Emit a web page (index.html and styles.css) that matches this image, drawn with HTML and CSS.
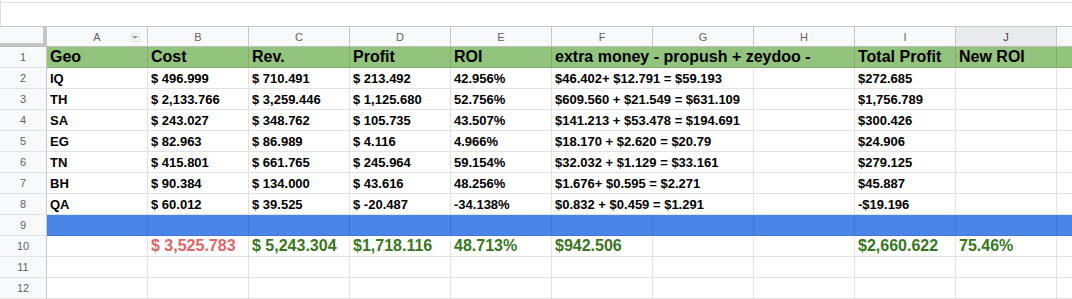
FILE: index.html
```html
<!DOCTYPE html>
<html lang="en">
<head>
  <meta charset="UTF-8" />
  <meta name="viewport" content="width=device-width, initial-scale=1.0" />
  <title>Geo Profit Sheet</title>
  <link rel="stylesheet" href="styles.css">
</head>
<body>
  <div class="formula-bar"></div>
  <table class="sheet">
    <colgroup>
      <col class="col-num">
      <col span="11" class="col-cell">
    </colgroup>
    <thead>
      <tr class="letters">
        <th class="corner"></th>
        <th class="filtered">A<span class="filter"></span></th>
        <th>B</th><th>C</th><th>D</th><th>E</th><th>F</th><th>G</th><th>H</th><th>I</th>
        <th class="active">J</th><th></th>
      </tr>
    </thead>
    <tbody>
      <tr class="r1 head">
        <th>1</th>
        <td>Geo</td><td>Cost</td><td>Rev.</td><td>Profit</td><td>ROI</td>
        <td colspan="3">extra money - propush + zeydoo -</td>
        <td>Total Profit</td><td>New ROI</td><td></td>
      </tr>
      <tr>
        <th>2</th>
        <td>IQ</td><td>$ 496.999</td><td>$ 710.491</td><td>$ 213.492</td><td>42.956%</td>
        <td colspan="2">$46.402+ $12.791 = $59.193</td><td></td>
        <td>$272.685</td><td></td><td></td>
      </tr>
      <tr>
        <th>3</th>
        <td>TH</td><td>$ 2,133.766</td><td>$ 3,259.446</td><td>$ 1,125.680</td><td>52.756%</td>
        <td colspan="2">$609.560 + $21.549 = $631.109</td><td></td>
        <td>$1,756.789</td><td></td><td></td>
      </tr>
      <tr>
        <th>4</th>
        <td>SA</td><td>$ 243.027</td><td>$ 348.762</td><td>$ 105.735</td><td>43.507%</td>
        <td colspan="2">$141.213 + $53.478 = $194.691</td><td></td>
        <td>$300.426</td><td></td><td></td>
      </tr>
      <tr>
        <th>5</th>
        <td>EG</td><td>$ 82.963</td><td>$ 86.989</td><td>$ 4.116</td><td>4.966%</td>
        <td colspan="2">$18.170 + $2.620 = $20.79</td><td></td>
        <td>$24.906</td><td></td><td></td>
      </tr>
      <tr>
        <th>6</th>
        <td>TN</td><td>$ 415.801</td><td>$ 661.765</td><td>$ 245.964</td><td>59.154%</td>
        <td colspan="2">$32.032 + $1.129 = $33.161</td><td></td>
        <td>$279.125</td><td></td><td></td>
      </tr>
      <tr>
        <th>7</th>
        <td>BH</td><td>$ 90.384</td><td>$ 134.000</td><td>$ 43.616</td><td>48.256%</td>
        <td colspan="2">$1.676+ $0.595 = $2.271</td><td></td>
        <td>$45.887</td><td></td><td></td>
      </tr>
      <tr>
        <th>8</th>
        <td>QA</td><td>$ 60.012</td><td>$ 39.525</td><td>$ -20.487</td><td>-34.138%</td>
        <td colspan="2">$0.832 + $0.459 = $1.291</td><td></td>
        <td>-$19.196</td><td></td><td></td>
      </tr>
      <tr class="r9 divider">
        <th>9</th>
        <td></td><td></td><td></td><td></td><td></td><td></td><td></td><td></td><td></td><td></td><td></td>
      </tr>
      <tr class="r10 totals">
        <th>10</th>
        <td></td><td class="neg">$ 3,525.783</td><td>$ 5,243.304</td><td>$1,718.116</td><td>48.713%</td>
        <td>$942.506</td><td></td><td></td>
        <td>$2,660.622</td><td>75.46%</td><td></td>
      </tr>
      <tr>
        <th>11</th>
        <td></td><td></td><td></td><td></td><td></td><td></td><td></td><td></td><td></td><td></td><td></td>
      </tr>
      <tr>
        <th>12</th>
        <td></td><td></td><td></td><td></td><td></td><td></td><td></td><td></td><td></td><td></td><td></td>
      </tr>
    </tbody>
  </table>
</body>
</html>
```

FILE: styles.css
```css
html, body { margin: 0; overflow: hidden; background: #fff; }
body { font-family: Arial, "Liberation Sans", sans-serif; color: #000; }

.formula-bar {
  height: 26px;
  box-sizing: border-box;
  border-left: 1px solid #e0e0e0;
  background: linear-gradient(#e0e0e0, #e0e0e0) 0 2px / 100% 1px no-repeat;
}

.sheet {
  border-collapse: separate;
  border-spacing: 0;
  table-layout: fixed;
  width: 1158px;
}
.col-num { width: 47px; }
.col-cell { width: 101px; }

.sheet td, .sheet th {
  padding: 0 3px;
  border-right: 1px solid rgba(0, 0, 0, 0.115);
  border-bottom: 1px solid rgba(0, 0, 0, 0.115);
  white-space: nowrap;
  overflow: hidden;
  text-align: left;
  vertical-align: middle;
}
.sheet td { font-size: 13px; font-weight: bold; }
.sheet tr { height: 21px; }

/* column letters */
.letters { height: 24px; }
.letters th {
  background: #f8f9fa;
  border-top: 1px solid #c7c7c7;
  border-right: 1px solid #c7c7c7;
  border-bottom: 1px solid #bdbdbd;
  font-size: 11px;
  font-weight: normal;
  color: #5f6368;
  text-align: center;
}
.letters th.active { background: #e8eaed; color: #3c4043; }
.letters th.corner { box-shadow: inset -3px -3px 0 #c4c7c5; }
.filtered { position: relative; }
.filter {
  position: absolute;
  right: 7px;
  top: 6px;
  width: 7px;
  height: 7px;
  border: 1px solid #e3e4e6;
  background: #f3f4f5;
}
.filter::after {
  content: "";
  position: absolute;
  left: 0;
  top: 2px;
  border-left: 3.5px solid transparent;
  border-right: 3.5px solid transparent;
  border-top: 3px solid #9aa0a6;
}

/* row numbers */
tbody th {
  background: #f8f9fa;
  border-right-color: #c7c7c7 !important;
  border-bottom-color: #e2e2e2 !important;
  font-size: 11px;
  font-weight: normal;
  color: #5f6368;
  text-align: center !important;
}

.r1 { height: 25px; }
.head td { background: #93c47d; font-size: 16px; }

.r9 { height: 22px; }
.divider td { background: #4a86e8; }

.r10 { height: 23px; }
.totals td { font-size: 16px; color: #38761d; }
.totals td.neg { color: #e06666; }
```
